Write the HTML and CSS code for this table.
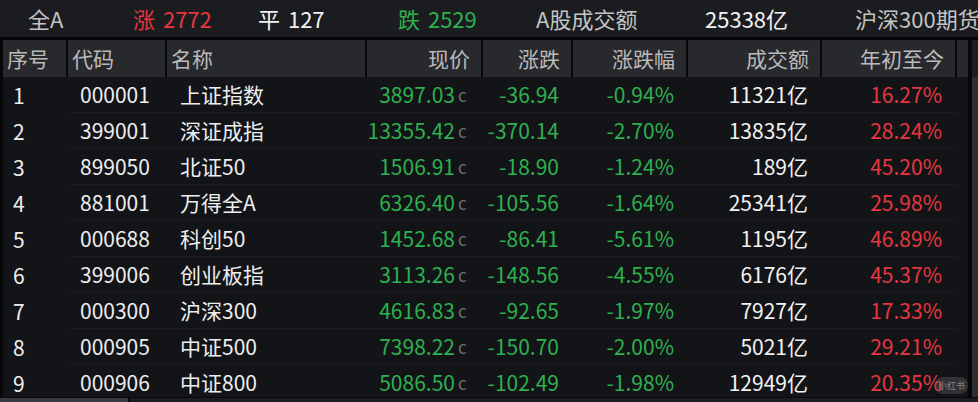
FILE: index.html
```html
<!DOCTYPE html>
<html lang="zh-CN">
<head>
<meta charset="utf-8">
<link rel="stylesheet" href="styles.css">
</head>
<body>
<div class="app">
  <div class="topbar">
    <span class="ti gray">全A</span>
    <span class="ti red">涨 2772</span>
    <span class="ti white">平 127</span>
    <span class="ti green">跌 2529</span>
    <span class="ti gray">A股成交额</span>
    <span class="ti white">25338亿</span>
    <span class="ti gray nowrap">沪深300期货</span>
  </div>
  <div class="main">
    <div class="table">
      <div class="thead">
        <div class="th l">序号</div>
        <div class="th l">代码</div>
        <div class="th l">名称</div>
        <div class="th r">现价</div>
        <div class="th r">涨跌</div>
        <div class="th r">涨跌幅</div>
        <div class="th r">成交额</div>
        <div class="th r">年初至今</div>
        <div class="th end"></div>
      </div>
      <div class="tbody">
        <div class="tr">
          <div class="td idx">1</div><div class="td code">000001</div><div class="td name">上证指数</div>
          <div class="td price green"><span>3897.03</span><span class="c">c</span></div>
          <div class="td num green">-36.94</div><div class="td num green">-0.94%</div>
          <div class="td num white">11321亿</div><div class="td num red ytd">16.27%</div><div class="td end"></div>
        </div>
        <div class="tr">
          <div class="td idx">2</div><div class="td code">399001</div><div class="td name">深证成指</div>
          <div class="td price green"><span>13355.42</span><span class="c">c</span></div>
          <div class="td num green">-370.14</div><div class="td num green">-2.70%</div>
          <div class="td num white">13835亿</div><div class="td num red ytd">28.24%</div><div class="td end"></div>
        </div>
        <div class="tr">
          <div class="td idx">3</div><div class="td code">899050</div><div class="td name">北证50</div>
          <div class="td price green"><span>1506.91</span><span class="c">c</span></div>
          <div class="td num green">-18.90</div><div class="td num green">-1.24%</div>
          <div class="td num white">189亿</div><div class="td num red ytd">45.20%</div><div class="td end"></div>
        </div>
        <div class="tr">
          <div class="td idx">4</div><div class="td code">881001</div><div class="td name">万得全A</div>
          <div class="td price green"><span>6326.40</span><span class="c">c</span></div>
          <div class="td num green">-105.56</div><div class="td num green">-1.64%</div>
          <div class="td num white">25341亿</div><div class="td num red ytd">25.98%</div><div class="td end"></div>
        </div>
        <div class="tr">
          <div class="td idx">5</div><div class="td code">000688</div><div class="td name">科创50</div>
          <div class="td price green"><span>1452.68</span><span class="c">c</span></div>
          <div class="td num green">-86.41</div><div class="td num green">-5.61%</div>
          <div class="td num white">1195亿</div><div class="td num red ytd">46.89%</div><div class="td end"></div>
        </div>
        <div class="tr">
          <div class="td idx">6</div><div class="td code">399006</div><div class="td name">创业板指</div>
          <div class="td price green"><span>3113.26</span><span class="c">c</span></div>
          <div class="td num green">-148.56</div><div class="td num green">-4.55%</div>
          <div class="td num white">6176亿</div><div class="td num red ytd">45.37%</div><div class="td end"></div>
        </div>
        <div class="tr">
          <div class="td idx">7</div><div class="td code">000300</div><div class="td name">沪深300</div>
          <div class="td price green"><span>4616.83</span><span class="c">c</span></div>
          <div class="td num green">-92.65</div><div class="td num green">-1.97%</div>
          <div class="td num white">7927亿</div><div class="td num red ytd">17.33%</div><div class="td end"></div>
        </div>
        <div class="tr">
          <div class="td idx">8</div><div class="td code">000905</div><div class="td name">中证500</div>
          <div class="td price green"><span>7398.22</span><span class="c">c</span></div>
          <div class="td num green">-150.70</div><div class="td num green">-2.00%</div>
          <div class="td num white">5021亿</div><div class="td num red ytd">29.21%</div><div class="td end"></div>
        </div>
        <div class="tr">
          <div class="td idx">9</div><div class="td code">000906</div><div class="td name">中证800</div>
          <div class="td price green"><span>5086.50</span><span class="c">c</span></div>
          <div class="td num green">-102.49</div><div class="td num green">-1.98%</div>
          <div class="td num white">12949亿</div><div class="td num red ytd">20.35%</div><div class="td end"></div>
        </div>
      </div>
    </div>
    <div class="vsep"></div>
    <div class="vscroll"><div class="vtrack-top"></div><div class="vthumb"></div></div>
    <div class="watermark">小红书</div>
  </div>
  <div class="hscroll"><div class="hthumb"></div><div class="htrack"></div></div>
</div>
</body>
</html>
```

FILE: styles.css
```css
* { box-sizing: border-box; }
html, body { margin: 0; padding: 0; }
body {
  width: 978px;
  height: 402px;
  overflow: hidden;
  background: #131418;
  font-family: "Noto Sans CJK SC", "Noto Sans", sans-serif;
  font-size: 21px;
  color: #eeeeee;
}
.app { display: flex; flex-direction: column; height: 402px; }

.topbar {
  flex: none;
  background: #1b1c20;
  display: grid;
  grid-template-columns: 105px 125px 140px 138px 169px 150px auto;
  padding-left: 28px;
  align-items: center;
  border-bottom: 3px solid #070708;
  height: 40px;
  padding-bottom: 2px;
  white-space: nowrap;
  overflow: hidden;
  font-size: 22px;
  word-spacing: 3px;
}
.ti { line-height: 1; }
.gray { color: #c4c4c4; }
.white { color: #f2f2f2; }
.red { color: #e6373f; }
.green { color: #2cb14e; }

.main { flex: 1; display: flex; position: relative; min-height: 0; }
.table {
  width: 968px;
  border-left: 3px solid #070708;
  display: flex;
  flex-direction: column;
  min-height: 0;
}
.thead, .tr {
  display: grid;
  grid-template-columns: 65px 99px 200px 116px 90px 115px 134px 135px 11px;
}
.thead { height: 37px; background: #28292d; flex: none; }
.th {
  display: flex;
  align-items: center;
  color: #bababa;
  border-right: 2px solid #070708;
  padding-bottom: 2px;
}
.th.l { padding-left: 4px; }
.th.r { justify-content: flex-end; padding-right: 11px; }
.th.end { border-right: none; }

.tbody { flex: 1; overflow: hidden; min-height: 0; }
.tr { height: 36px; }
.td {
  display: flex;
  align-items: center;
  border-bottom: 1px solid #1c1d21;
  white-space: nowrap;
  padding-bottom: 1px;
}
.td.idx { border-bottom: none; padding-left: 10px; }
.td.end { border-bottom: none; }
.td.code { padding-left: 12px; }
.td.name { padding-left: 13px; }
.td.num { justify-content: flex-end; padding-right: 14px; }
.td.ytd { padding-right: 15px; }
.td.price { justify-content: flex-end; padding-right: 13px; }
.c { color: #6f6f72; font-size: 17px; width: 12px; margin-left: 3px; text-align: left; }

.vsep { width: 4px; background: #070708; flex: none; }
.vscroll { width: 6px; flex: none; display: flex; flex-direction: column; }
.vtrack-top { height: 37px; background: #1c1d21; }
.vthumb { flex: 1; background: #2c2d31; }

.hscroll {
  height: 5px;
  flex: none;
  border-top: 1px solid #070708;
  display: flex;
  background: #1c1d21;
}
.hthumb { width: 128px; background: #3a3b40; }
.htrack { flex: 1; border-left: 2px solid #070708; }

.watermark {
  position: absolute;
  right: 10px;
  bottom: 3px;
  height: 17px;
  padding: 0 3px;
  border-radius: 8px;
  background: rgba(120, 120, 120, 0.3);
  color: rgba(220, 220, 220, 0.5);
  font-size: 9px;
  line-height: 17px;
}
```
